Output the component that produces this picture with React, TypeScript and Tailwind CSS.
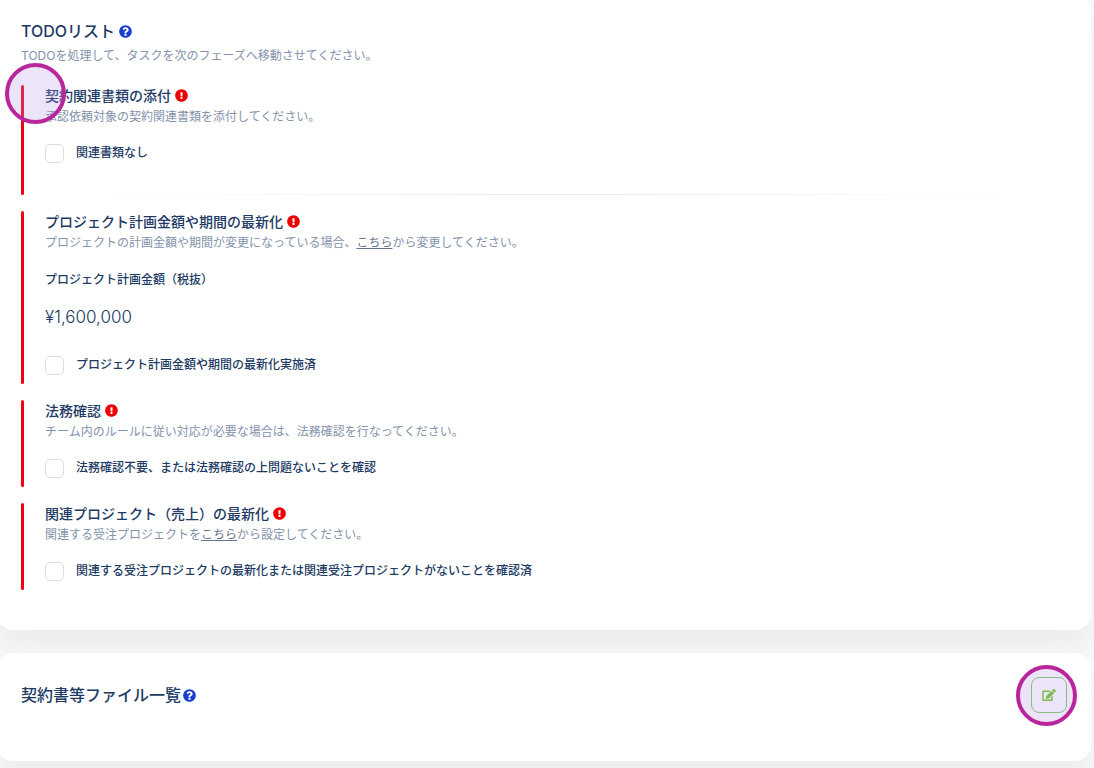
import type { ReactNode } from 'react';
import { FaEdit, FaExclamationCircle, FaQuestionCircle } from 'react-icons/fa';

interface TodoItemProps {
  title: string;
  description: ReactNode;
  checkLabel: string;
  checkId: string;
  marked?: boolean;
  divider?: boolean;
  children?: ReactNode;
}

function Marker({ className }: { className: string }) {
  return (
    <span
      aria-hidden="true"
      className={`pointer-events-none absolute h-[61px] w-[61px] rounded-full border-4 border-[#b9269b] bg-[#b496eb]/25 ${className}`}
    />
  );
}

function HelpButton({ label }: { label: string }) {
  return (
    <button type="button" aria-label={label} className="text-[#173fcd]">
      <FaQuestionCircle className="h-[13px] w-[13px]" />
    </button>
  );
}

function InlineLink({ children }: { children: ReactNode }) {
  return (
    <a href="#" className="text-[#67748e] underline underline-offset-1">
      {children}
    </a>
  );
}

function TodoItem({ title, description, checkLabel, checkId, marked, divider, children }: TodoItemProps) {
  return (
    <li className="relative flex">
      <div className="w-[3px] shrink-0 rounded-full bg-[#f00014]" />
      <div className="min-w-0 flex-1 pl-[21px]">
        <div className="flex items-center gap-1">
          <h3 className="text-[14px] leading-[21px] font-medium">{title}</h3>
          <FaExclamationCircle className="h-[13px] w-[13px] text-[#ee0000]" />
        </div>
        <p className="text-[12px] leading-[22px] text-[#8392ab]">{description}</p>
        {children}
        <div className={`flex items-center gap-3 pb-2 ${children ? 'mt-[25px]' : 'mt-[14px]'}`}>
          <input
            id={checkId}
            type="checkbox"
            className="h-[19px] w-[19px] shrink-0 appearance-none rounded-[5px] border border-[#d9dde3] bg-white checked:bg-[#213a64]"
          />
          <label htmlFor={checkId} className="text-[12px] leading-[22px] font-medium">
            {checkLabel}
          </label>
        </div>
        {divider && (
          <hr className="mx-10 mt-[22px] h-px border-0 bg-linear-to-r from-transparent via-[#e9ebee] to-transparent" />
        )}
      </div>
      {marked && <Marker className="-top-[22px] -left-4" />}
    </li>
  );
}

export default function App() {
  return (
    <main
      lang="ja"
      className="min-h-screen overflow-hidden bg-[#f8f9fa] pb-2 font-['Inter','Noto_Sans_CJK_JP',sans-serif] text-[#213a64]"
    >
      <div className="-mt-[5px] mr-[3px] -ml-[3px] flex flex-col gap-[23px]">
        <section className="rounded-2xl bg-white px-6 pt-6 pb-10 shadow-[0_20px_27px_0_rgba(0,0,0,0.05)]">
          <div className="flex items-center gap-1">
            <h2 className="text-[16px] leading-6 font-medium">TODOリスト</h2>
            <HelpButton label="TODOリストのヘルプ" />
          </div>
          <p className="mt-0.5 text-[12px] leading-[22px] text-[#8392ab]">
            TODOを処理して、タスクを次のフェーズへ移動させてください。
          </p>

          <ul className="mt-[18px] flex flex-col gap-4">
            <TodoItem
              title="契約関連書類の添付"
              description="承認依頼対象の契約関連書類を添付してください。"
              checkLabel="関連書類なし"
              checkId="no-documents"
              marked
              divider
            />
            <TodoItem
              title="プロジェクト計画金額や期間の最新化"
              description={
                <>
                  プロジェクトの計画金額や期間が変更になっている場合、<InlineLink>こちら</InlineLink>から変更してください。
                </>
              }
              checkLabel="プロジェクト計画金額や期間の最新化実施済"
              checkId="plan-updated"
            >
              <h4 className="mt-[15px] text-[12px] leading-[22px] font-medium">プロジェクト計画金額（税抜）</h4>
              <p className="mt-[14px] text-[17px] leading-6 font-light">¥1,600,000</p>
            </TodoItem>
            <TodoItem
              title="法務確認"
              description="チーム内のルールに従い対応が必要な場合は、法務確認を行なってください。"
              checkLabel="法務確認不要、または法務確認の上問題ないことを確認"
              checkId="legal-checked"
            />
            <TodoItem
              title="関連プロジェクト（売上）の最新化"
              description={
                <>
                  関連する受注プロジェクトを<InlineLink>こちら</InlineLink>から設定してください。
                </>
              }
              checkLabel="関連する受注プロジェクトの最新化または関連受注プロジェクトがないことを確認済"
              checkId="related-updated"
            />
          </ul>
        </section>

        <section className="flex items-center justify-between rounded-2xl bg-white px-6 pt-6 pb-12 shadow-[0_20px_27px_0_rgba(0,0,0,0.05)]">
          <div className="flex items-center gap-0.5">
            <h2 className="text-[16px] leading-6 font-medium">契約書等ファイル一覧</h2>
            <HelpButton label="契約書等ファイル一覧のヘルプ" />
          </div>
          <div className="relative">
            <button
              type="button"
              aria-label="編集"
              className="flex h-9 w-9 items-center justify-center rounded-lg border border-[#82c95f] text-[#6cc414]"
            >
              <FaEdit className="h-3 w-[14px]" />
            </button>
            <Marker className="-top-3 -left-[15px]" />
          </div>
        </section>
      </div>
    </main>
  );
}
